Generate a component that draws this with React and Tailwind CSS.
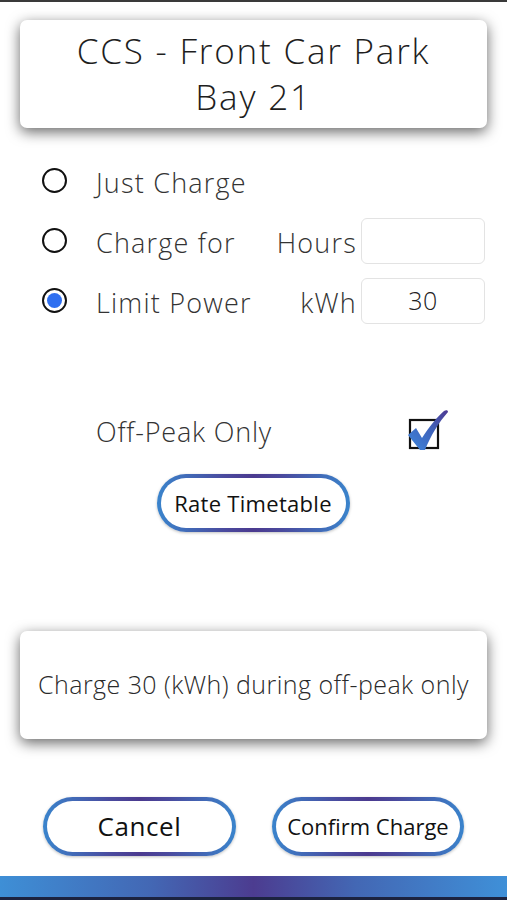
import React from "react";

const font = { fontFamily: "'Open Sans', Lato, sans-serif" };

function Radio({ checked }) {
  return (
    <div className="w-[25px] h-[25px] rounded-full border-2 border-[#111] flex items-center justify-center shrink-0 bg-white">
      {checked && <div className="w-[15px] h-[15px] rounded-full bg-[#2f6ff0]" />}
    </div>
  );
}

function GradButton({ className, textClass, children }) {
  return (
    <div className={"rounded-full p-[4px] bg-[linear-gradient(90deg,#3a84cc_0%,#4a4a9e_35%,#4b3a8f_50%,#4a4a9e_65%,#3a84cc_100%)] shadow-[0_1px_3px_rgba(0,0,0,0.25)] " + className}>
      <div className={"w-full h-full rounded-full bg-white flex items-center justify-center text-[#111] " + textClass}>
        {children}
      </div>
    </div>
  );
}

function Check() {
  return (
    <svg width="42" height="42" viewBox="0 0 42 42" className="overflow-visible">
      <defs>
        <linearGradient id="ck" x1="0" y1="1" x2="1" y2="0">
          <stop offset="0" stopColor="#3d86dc" />
          <stop offset="0.55" stopColor="#3f62ba" />
          <stop offset="1" stopColor="#4e3a92" />
        </linearGradient>
      </defs>
      <rect x="3" y="11" width="28" height="28" fill="white" stroke="#111" strokeWidth="2.2" />
      <path d="M1 26 L9 19 L15 29 C22 18 30 8 37 2 C39 1 41 1 41 3 C32 13 24 26 18 41 L13 41 Z" fill="url(#ck)" />
    </svg>
  );
}

export default function App() {
  return (
    <div className="w-[507px] h-[900px] bg-white flex flex-col overflow-hidden" style={font}>
      <div className="h-[2px] bg-[#3a3a3a] shrink-0" />
      <div className="mx-[20px] mt-[18px] h-[108px] bg-white rounded-[7px] shadow-[0_4px_14px_rgba(0,0,0,0.6)] flex flex-col items-center justify-center text-[#1e1e1e] text-[35px] leading-[46px] font-light tracking-[1.8px]">
        <div>CCS - Front Car Park</div>
        <div>Bay 21</div>
      </div>

      <div className="mt-[30px] pl-[42px] pr-[22px] flex flex-col gap-[14px] text-[27px] text-[#333] font-light tracking-[1.2px]">
        <div className="flex items-center h-[46px]">
          <Radio />
          <span className="ml-[29px] mt-[6px]">Just Charge</span>
        </div>
        <div className="flex items-center h-[46px]">
          <Radio />
          <span className="ml-[29px] mt-[6px] flex-1">Charge for</span>
          <span className="mt-[6px]">Hours</span>
          <div className="ml-[4px] w-[124px] h-[46px] rounded-[6px] border border-[#e3e3e3] bg-white" />
        </div>
        <div className="flex items-center h-[46px]">
          <Radio checked />
          <span className="ml-[29px] mt-[6px] flex-1">Limit Power</span>
          <span className="mt-[6px]">kWh</span>
          <div className="ml-[4px] w-[124px] h-[46px] rounded-[6px] border border-[#e3e3e3] bg-white flex items-center justify-center text-[25px] tracking-[0.5px] text-[#222]">30</div>
        </div>
      </div>

      <div className="mt-[86px] h-[46px] pl-[96px] pr-[58px] flex items-center justify-between text-[27px] text-[#333] font-light tracking-[0.8px]">
        <span>Off-Peak Only</span>
        <div className="-mt-[6px]">
          <Check />
        </div>
      </div>

      <div className="mt-[19px] flex justify-center pr-[1px]">
        <GradButton className="w-[193px] h-[58px]" textClass="text-[22px] font-medium tracking-[0.3px]">Rate Timetable</GradButton>
      </div>

      <div className="mx-[20px] mt-[99px] h-[108px] bg-white rounded-[7px] shadow-[0_4px_14px_rgba(0,0,0,0.6)] flex items-center justify-center text-[25px] text-[#2a2a2a] font-light tracking-[0.45px]">
        Charge 30 (kWh) during off-peak only
      </div>

      <div className="mt-[58px] flex pl-[43px] gap-[36px]">
        <GradButton className="w-[193px] h-[59px]" textClass="text-[26px] font-medium tracking-[0.6px]">Cancel</GradButton>
        <GradButton className="w-[192px] h-[59px]" textClass="text-[22px] font-medium">Confirm Charge</GradButton>
      </div>

      <div className="mt-[20px] h-[21px] shrink-0 bg-[linear-gradient(90deg,#3e8fd6_0%,#4367b4_30%,#4c3c90_50%,#4367b4_70%,#3f90d8_100%)]" />
      <div className="h-[3px] bg-[#1c2340] shrink-0" />
    </div>
  );
}
